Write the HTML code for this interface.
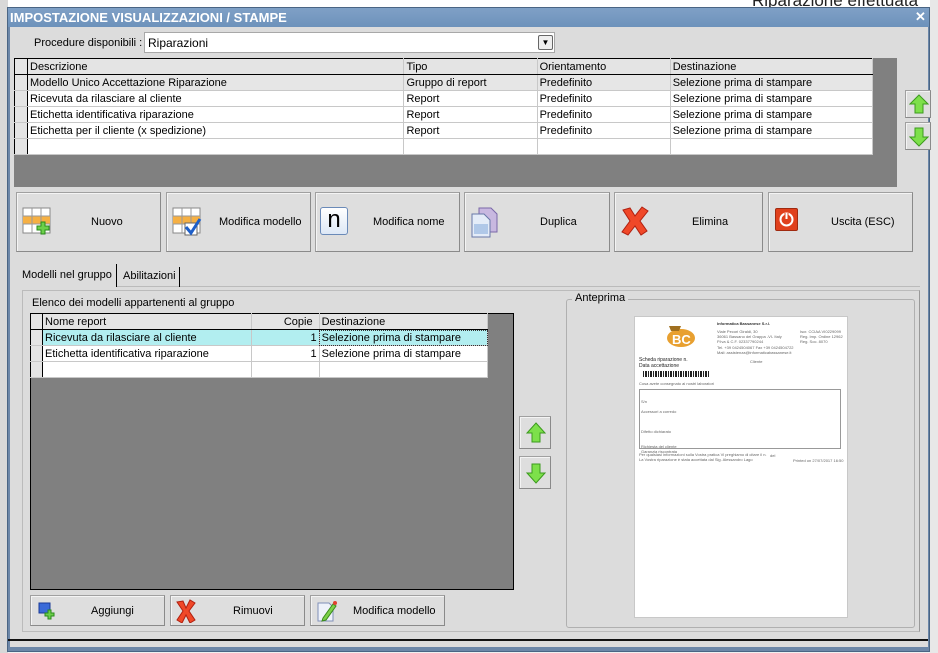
<!DOCTYPE html>
<html><head><meta charset="utf-8"><style>
*{box-sizing:border-box;margin:0;padding:0}
body{width:938px;height:653px;overflow:hidden;background:#f0f0f0;font-family:"Liberation Sans",sans-serif;font-size:11px;color:#000;position:relative}
.a{position:absolute;white-space:nowrap}
.btn{position:absolute;background:#dedede;border:1px solid #a0a0a0;border-right-color:#8a8a8a;border-bottom-color:#8a8a8a;box-shadow:inset 1px 1px 0 #f4f4f4}
.btn span{position:absolute;top:50%;transform:translateY(-50%);font-size:11px;white-space:nowrap}
table{border-collapse:collapse;position:absolute;background:#fff;table-layout:fixed}
td{border-right:1px solid #c8c8c8;border-bottom:1px solid #c8c8c8;height:16px;padding:1px 2px 0;white-space:nowrap;overflow:hidden;font-size:11px;line-height:14px}
tr.h td{background:#e4e4e4;border-bottom:1px solid #000}
td.i{background:#e4e4e4;border-right:1px solid #000;padding:0}
.t{font-size:4px;color:#666;position:absolute;white-space:nowrap}
</style></head><body>
<div class="a" style="left:0;top:0;width:938px;height:8px;background:#fff"></div>
<div class="a" style="left:0;top:0;width:8px;height:653px;background:#d8d8d8"></div>
<div class="a" style="left:930px;top:0;width:8px;height:653px;background:#e8e8e8"></div>
<div class="a" style="left:752px;top:-9px;font-size:17px;color:#222">Riparazione effettuata</div>
<div class="a" style="left:7px;top:7px;width:923px;height:645px;background:#6c87a8;border:1px solid #4a6584"></div>
<div class="a" style="left:8px;top:8px;width:921px;height:19px;background:linear-gradient(#7fa0c6,#6d92bb)"></div>
<div class="a" style="left:10px;top:10px;color:#fff;font-weight:bold;font-size:13px">IMPOSTAZIONE VISUALIZZAZIONI / STAMPE</div>
<div class="a" style="left:915px;top:9px;color:#fff;font-weight:bold;font-size:13px">✕</div>
<div class="a" style="left:10px;top:27px;width:918px;height:620px;background:#dcdcdc"></div>
<div class="a" style="left:8px;top:639px;width:920px;height:2px;background:#111"></div>

<div class="a" style="left:34px;top:37px;font-size:11px">Procedure disponibili :</div>
<div class="a" style="left:144px;top:32px;width:411px;height:21px;background:#fff;border:1px solid #a8a8a8"><span class="a" style="left:3px;top:3px;font-size:12px">Riparazioni</span>
<div class="a" style="left:393px;top:2px;width:15px;height:15px;border:1px solid #666;background:#eee;border-radius:2px;font-size:8px;text-align:center;line-height:14px">▼</div></div>

<div class="a" style="left:14px;top:58px;width:883px;height:129px;background:#808080"></div>
<table style="left:14px;top:58px;width:859px;border:1px solid #000">
<colgroup><col style="width:13px"><col style="width:376px"><col style="width:133px"><col style="width:133px"><col style="width:202px"></colgroup>
<tr class="h"><td class="i"></td><td>Descrizione</td><td>Tipo</td><td>Orientamento</td><td>Destinazione</td></tr>
<tr style="background:#e6e6e6"><td class="i"></td><td>Modello Unico Accettazione Riparazione</td><td>Gruppo di report</td><td>Predefinito</td><td>Selezione prima di stampare</td></tr>
<tr><td class="i"></td><td>Ricevuta da rilasciare al cliente</td><td>Report</td><td>Predefinito</td><td>Selezione prima di stampare</td></tr>
<tr><td class="i"></td><td>Etichetta identificativa riparazione</td><td>Report</td><td>Predefinito</td><td>Selezione prima di stampare</td></tr>
<tr><td class="i"></td><td>Etichetta per il cliente (x spedizione)</td><td>Report</td><td>Predefinito</td><td>Selezione prima di stampare</td></tr>
<tr><td class="i"></td><td></td><td></td><td></td><td></td></tr>
</table>
<div class="btn" style="left:905px;top:90px;width:26px;height:28px"><svg class="a" style="left:3px;top:3px" width="20" height="20"><path d="M10 1 L19 10 L14 10 L14 19 L6 19 L6 10 L1 10Z" fill="#7de04a" stroke="#3c9a1e"/></svg></div>
<div class="btn" style="left:905px;top:122px;width:26px;height:28px"><svg class="a" style="left:3px;top:4px" width="20" height="20"><path d="M10 19 L19 10 L14 10 L14 1 L6 1 L6 10 L1 10Z" fill="#7de04a" stroke="#3c9a1e"/></svg></div>

<div class="btn" style="left:16px;top:192px;width:145px;height:60px">
<svg class="a" style="left:5px;top:14px" width="30" height="30"><rect x="1" y="1" width="27" height="25" fill="#fff" stroke="#888"/><rect x="1" y="9" width="27" height="8" fill="#f6b043"/><path d="M10 1V26M19 1V26M1 9H28M1 17H28" stroke="#999"/><path d="M19 15h4v4h4v4h-4v4h-4v-4h-4v-4h4z" fill="#6cd04a" stroke="#2a8a1a"/></svg>
<span style="left:74px">Nuovo</span></div>
<div class="btn" style="left:166px;top:192px;width:145px;height:60px">
<svg class="a" style="left:5px;top:14px" width="30" height="30"><rect x="1" y="1" width="27" height="25" fill="#fff" stroke="#888"/><rect x="1" y="9" width="27" height="8" fill="#f6b043"/><path d="M10 1V26M19 1V26M1 9H28M1 17H28" stroke="#999"/><rect x="13" y="16" width="12" height="12" fill="#fff" stroke="#666"/><path d="M14 20l5 6 9-14" stroke="#1e5fc8" stroke-width="3" fill="none"/></svg>
<span style="left:52px">Modifica modello</span></div>
<div class="btn" style="left:315px;top:192px;width:145px;height:60px">
<div class="a" style="left:4px;top:14px;width:28px;height:28px;border:1px solid #6a8ab8;border-radius:3px;background:linear-gradient(#fff,#dde8f6);font-size:24px;text-align:center;line-height:24px">n</div>
<span style="left:57px">Modifica nome</span></div>
<div class="btn" style="left:464px;top:192px;width:146px;height:60px">
<svg class="a" style="left:5px;top:13px" width="30" height="32"><path d="M9 2h12l6 6v18H9z" fill="#c8b8e0" stroke="#7a68a8"/><path d="M2 8h12l6 6v17H2z" fill="#e4ecf8" stroke="#6878a8"/><rect x="4" y="18" width="14" height="10" fill="#b0c8e8"/></svg>
<span style="left:75px">Duplica</span></div>
<div class="btn" style="left:614px;top:192px;width:149px;height:60px">
<svg class="a" style="left:5px;top:13px" width="30" height="30"><path d="M3 4l7-2 5 8 7-9 6 4-8 10 7 10-6 4-6-9-7 9-6-3 8-11z" fill="#f04828" stroke="#b02010"/></svg>
<span style="left:77px">Elimina</span></div>
<div class="btn" style="left:768px;top:192px;width:145px;height:60px">
<div class="a" style="left:6px;top:15px;width:23px;height:23px;background:#e0401c;border:1px solid #a02a10;border-radius:2px"><svg width="21" height="21"><circle cx="10.5" cy="10.5" r="6" fill="none" stroke="#fff" stroke-width="2"/><path d="M10.5 4v7" stroke="#e0401c" stroke-width="4"/><path d="M10.5 4v6" stroke="#fff" stroke-width="2"/></svg></div>
<span style="left:62px">Uscita (ESC)</span></div>

<div class="a" style="left:15px;top:286px;width:905px;height:1px;background:#bbb"></div>
<div class="a" style="left:15px;top:264px;width:102px;height:23px;background:#dcdcdc;border-right:1px solid #000"><span class="a" style="left:7px;top:5px">Modelli nel gruppo</span></div>
<div class="a" style="left:117px;top:267px;width:63px;height:20px;border-right:1px solid #000"><span class="a" style="left:6px;top:3px">Abilitazioni</span></div>
<div class="a" style="left:22px;top:290px;width:898px;height:342px;border:1px solid #bbb;border-right:1px solid #999"></div>
<div class="a" style="left:32px;top:297px">Elenco dei modelli appartenenti al gruppo</div>
<div class="a" style="left:30px;top:313px;width:484px;height:277px;background:#808080;border:1px solid #000"></div>
<table style="left:30px;top:313px;width:458px;border:1px solid #000">
<colgroup><col style="width:12px"><col style="width:209px"><col style="width:67px"><col style="width:168px"></colgroup>
<tr class="h"><td class="i"></td><td>Nome report</td><td style="text-align:right;padding-right:6px">Copie</td><td>Destinazione</td></tr>
<tr style="background:#b2eef0"><td class="i"></td><td>Ricevuta da rilasciare al cliente</td><td style="text-align:right">1</td><td style="outline:1px dotted #333;outline-offset:-1px">Selezione prima di stampare</td></tr>
<tr><td class="i"></td><td>Etichetta identificativa riparazione</td><td style="text-align:right">1</td><td>Selezione prima di stampare</td></tr>
<tr><td class="i"></td><td></td><td></td><td></td></tr>
</table>
<div class="btn" style="left:519px;top:416px;width:32px;height:33px"><svg class="a" style="left:5px;top:5px" width="22" height="22"><path d="M11 1 L20 11 L15 11 L15 20 L7 20 L7 11 L2 11Z" fill="#7de04a" stroke="#3c9a1e"/></svg></div>
<div class="btn" style="left:519px;top:456px;width:32px;height:33px"><svg class="a" style="left:5px;top:5px" width="22" height="22"><path d="M11 21 L20 11 L15 11 L15 2 L7 2 L7 11 L2 11Z" fill="#7de04a" stroke="#3c9a1e"/></svg></div>

<div class="btn" style="left:30px;top:595px;width:135px;height:31px">
<svg class="a" style="left:6px;top:5px" width="20" height="20"><rect x="2" y="2" width="11" height="10" fill="#3a6ad8" stroke="#1a3a98"/><path d="M11 9h3v3h3v3h-3v3h-3v-3h-3v-3h3z" fill="#6cd04a" stroke="#2a8a1a"/></svg>
<span style="left:60px">Aggiungi</span></div>
<div class="btn" style="left:170px;top:595px;width:135px;height:31px">
<svg class="a" style="left:4px;top:3px" width="22" height="24"><path d="M2 3l6-1 3 7 4-8 5 3-6 8 6 9-5 3-4-8-4 8-5-3 6-9z" fill="#f04828" stroke="#b02010"/></svg>
<span style="left:62px">Rimuovi</span></div>
<div class="btn" style="left:310px;top:595px;width:135px;height:31px">
<svg class="a" style="left:4px;top:3px" width="24" height="24"><path d="M3 4h11l4 4v14H3z" fill="#eef2fa" stroke="#8090b8"/><path d="M8 19l10-14 3 2-10 14-4 1z" fill="#7cd04a" stroke="#3a8a1a"/><circle cx="20" cy="4" r="2" fill="#e04030"/></svg>
<span style="left:42px">Modifica modello</span></div>

<div class="a" style="left:566px;top:299px;width:349px;height:329px;border:1px solid #b0b0b0;border-radius:3px"></div>
<div class="a" style="left:572px;top:292px;background:#dcdcdc;padding:0 3px">Anteprima</div>
<div class="a" style="left:634px;top:316px;width:214px;height:302px;background:#fff;border:1px solid #c8c8c8">
<svg class="a" style="left:30px;top:5px" width="32" height="26"><ellipse cx="16" cy="16" rx="14" ry="9" fill="#e8a030"/><text x="7" y="22" font-size="13" font-weight="bold" fill="#fff" font-family="Liberation Sans">BC</text><path d="M4 4h12l-2 5H6z" fill="#a07020"/></svg>
<div class="t" style="left:82px;top:4px;font-weight:bold;color:#333">Informatica Bassanese S.r.l.</div>
<div class="t" style="left:82px;top:12px">Viale Pecori Giraldi, 30<br>36061 Bassano del Grappa -VI- Italy<br>P.Iva &amp; C.F. 02337790244</div>
<div class="t" style="left:165px;top:12px">Iscr. CCIAA VI0229099<br>Reg. Imp. Ordine 12962<br>Reg. Soc. 8070</div>
<div class="t" style="left:82px;top:28px">Tel. +39 0424504067 Fax +39 0424504722<br>Mail: assistenza@informaticabassanese.it</div>
<div class="t" style="left:4px;top:40px;font-size:5px;color:#222">Scheda riparazione n.<br>Data accettazione</div>
<div class="t" style="left:115px;top:42px">Cliente</div>
<div class="a" style="left:8px;top:54px;width:66px;height:6px;background:repeating-linear-gradient(90deg,#222 0 1px,#fff 1px 2px,#222 2px 4px,#fff 4px 5px)"></div>
<div class="t" style="left:4px;top:64px">Cosa avete consegnato ai nostri laboratori</div>
<div class="a" style="left:4px;top:72px;width:202px;height:60px;border:1px solid #999"></div>
<div class="t" style="left:6px;top:82px">S/n<br><br>Accessori a corredo<br><br><br><br>Difetto dichiarato<br><br><br>Richiesta del cliente<br>Garanzia riscontrata</div>
<div class="t" style="left:4px;top:135px">Per qualsiasi informazioni sulla Vostra pratica Vi preghiamo di citare il n.<br>La Vostra riparazione è stata accettata dal Sig. Alessandro Lago</div>
<div class="t" style="left:135px;top:136px">del</div>
<div class="t" style="left:158px;top:141px">Printed on 27/07/2017 16:50</div>
</div>
</body></html>
